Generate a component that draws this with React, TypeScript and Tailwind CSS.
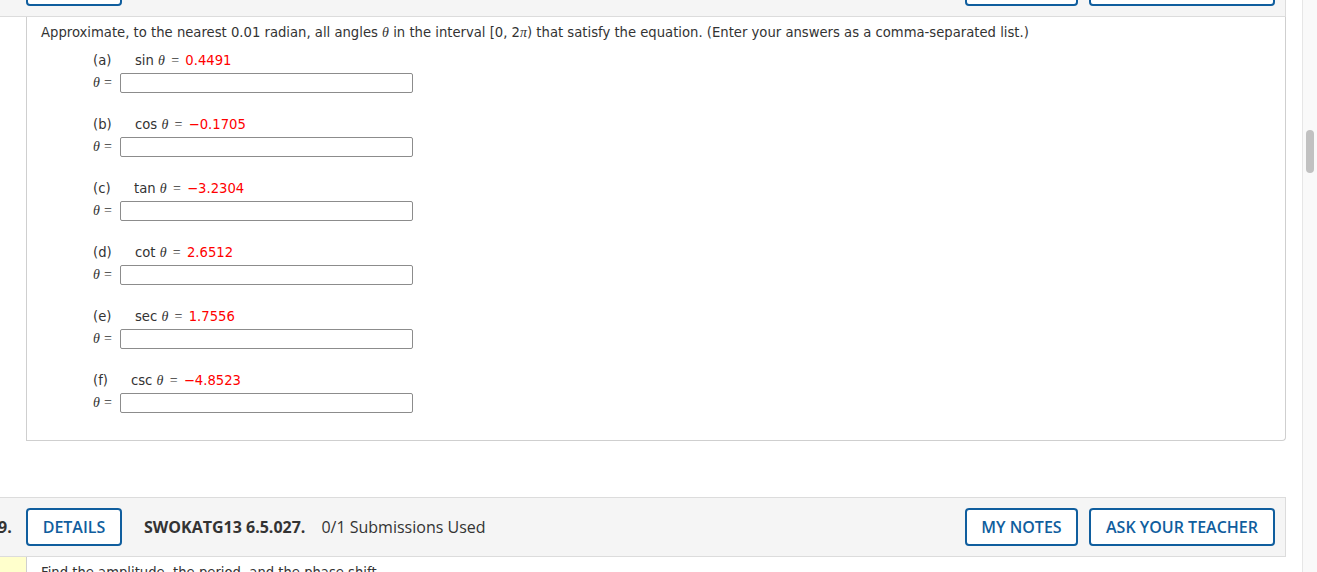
import React from "react";

const parts = [
  { key: "a", fn: "sin", value: "0.4491", indent: "w-[42px]" },
  { key: "b", fn: "cos", value: "\u22120.1705", indent: "w-[42px]" },
  { key: "c", fn: "tan", value: "\u22123.2304", indent: "w-[41px]" },
  { key: "d", fn: "cot", value: "2.6512", indent: "w-[42px]" },
  { key: "e", fn: "sec", value: "1.7556", indent: "w-[42px]" },
  { key: "f", fn: "csc", value: "\u22124.8523", indent: "w-[38px]" },
];

function Theta() {
  return <span className="font-['Liberation_Serif',serif] italic text-[14px]">θ</span>;
}

function Eq() {
  return <span className="mx-[2px] font-['Liberation_Serif',serif] text-[14px]">=</span>;
}

function OutlineButton({ label, className = "" }: { label: string; className?: string }) {
  return (
    <button
      className={
        "h-[38px] rounded-[4px] border-2 border-[#105e9e] bg-white text-[16px] font-semibold text-[#105e9e] " +
        className
      }
    >
      {label}
    </button>
  );
}

function QuestionHeader({ number, top }: { number?: string; top?: boolean }) {
  return (
    <div
      className={
        "flex h-[60px] items-center border-y border-r border-[#dcdcdc] bg-[#f5f5f5] " +
        (top ? "mt-[-43px]" : "")
      }
    >
      <div className="w-[26px] text-[16px] font-bold text-[#333]">
        {number && <span className="-ml-[2px]">{number}</span>}
      </div>
      <OutlineButton label="DETAILS" className="w-[96px]" />
      <span className="ml-[22px] text-[16px] font-bold text-[#333]">SWOKATG13 6.5.027.</span>
      <span className="ml-[16px] text-[16px] text-[#333]">0/1 Submissions Used</span>
      <div className="ml-auto flex gap-[11px] pr-[10px]">
        <OutlineButton label="MY NOTES" className="w-[113px]" />
        <OutlineButton label="ASK YOUR TEACHER" className="w-[186px]" />
      </div>
    </div>
  );
}

function Part({ p }: { p: (typeof parts)[number] }) {
  return (
    <div className="mt-[24px] first:mt-[12px]">
      <div className="flex h-[16px] items-center">
        <span className={p.indent}>({p.key})</span>
        <span>
          {p.fn} <Theta /> <Eq /> <span className="text-[#ff0000]">{p.value}</span>
        </span>
      </div>
      <div className="mt-[4px] flex items-center">
        <span className="w-[27px]">
          <Theta /> <span className="font-['Liberation_Serif',serif] text-[14px]">=</span>
        </span>
        <input className="h-[20px] w-[293px] rounded-[2px] border border-[#8c8c8c] bg-white outline-none" />
      </div>
    </div>
  );
}

export default function App() {
  return (
    <div className="flex h-[572px] w-[1317px] overflow-hidden bg-white font-['Open_Sans',sans-serif]">
      <div className="w-[1286px] shrink-0">
        <QuestionHeader top />
        <div className="ml-[26px] rounded-br-[4px] border-x border-b border-[#cfcfcf] pb-[27px] pl-[14px] pt-[8px] font-['DejaVu_Sans',Verdana,sans-serif] text-[13.2px] leading-[16px] text-[#333]">
          <p>
            Approximate, to the nearest 0.01 radian, all angles <Theta /> in the interval [0, 2
            <span className="font-['Liberation_Serif',serif] italic text-[14px]">π</span>) that satisfy the
            equation. (Enter your answers as a comma-separated list.)
          </p>
          <div className="ml-[52px]">
            {parts.map((p) => (
              <Part key={p.key} p={p} />
            ))}
          </div>
        </div>
        <div className="mt-[56px]">
          <QuestionHeader number="9." />
        </div>
        <div className="flex">
          <div className="h-[60px] w-[27px] shrink-0 border-r border-[#cfcfcf] bg-[#ffffcc]" />
          <p className="pl-[14px] pt-[8px] font-['DejaVu_Sans',Verdana,sans-serif] text-[13.2px] leading-[16px] text-[#333]">
            Find the amplitude, the period, and the phase shift.
          </p>
        </div>
      </div>
      <div className="w-[16px] shrink-0" />
      <div className="w-[15px] shrink-0 border-l border-[#e6e6e6] bg-[#f9f9f9] pl-[3px] pt-[130px]">
        <div className="h-[43px] w-[8px] rounded-full bg-[#c1c1c1]" />
      </div>
    </div>
  );
}
